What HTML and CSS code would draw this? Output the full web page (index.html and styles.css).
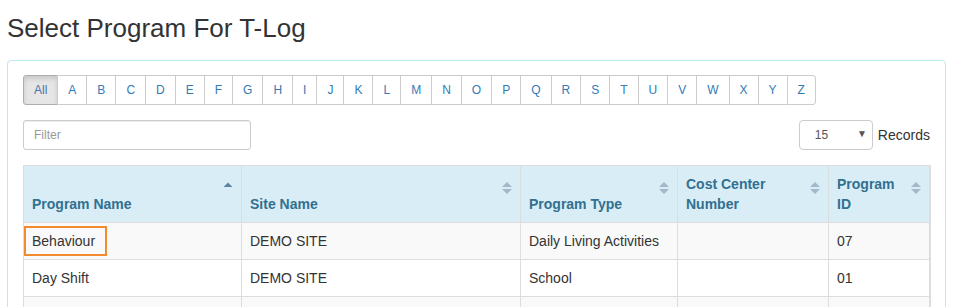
FILE: index.html
```html
<!DOCTYPE html>
<html lang="en">
<head>
  <meta charset="UTF-8">
  <meta name="viewport" content="width=device-width, initial-scale=1.0">
  <title>Select Program For T-Log</title>
  <link rel="stylesheet" href="styles.css">
</head>
<body>
  <div class="page">
    <h1 class="page-title">Select Program For T-Log</h1>

    <div class="panel">
      <!-- Letter filter -->
      <div class="letters">
        <button class="letter active">All</button>
        <button class="letter">A</button>
        <button class="letter">B</button>
        <button class="letter">C</button>
        <button class="letter">D</button>
        <button class="letter">E</button>
        <button class="letter">F</button>
        <button class="letter">G</button>
        <button class="letter">H</button>
        <button class="letter">I</button>
        <button class="letter">J</button>
        <button class="letter">K</button>
        <button class="letter">L</button>
        <button class="letter">M</button>
        <button class="letter">N</button>
        <button class="letter">O</button>
        <button class="letter">P</button>
        <button class="letter">Q</button>
        <button class="letter">R</button>
        <button class="letter">S</button>
        <button class="letter">T</button>
        <button class="letter">U</button>
        <button class="letter">V</button>
        <button class="letter">W</button>
        <button class="letter">X</button>
        <button class="letter">Y</button>
        <button class="letter">Z</button>
      </div>

      <div class="toolbar">
        <input class="filter" type="text" placeholder="Filter">
        <div class="records">
          <span class="select-wrap">
            <select class="page-size">
              <option>15</option>
              <option>30</option>
              <option>50</option>
            </select>
            <span class="caret">&#9660;</span>
          </span>
          <span>Records</span>
        </div>
      </div>

      <table class="programs">
        <colgroup>
          <col class="c1"><col class="c2"><col class="c3"><col class="c4"><col class="c5">
        </colgroup>
        <thead>
          <tr>
            <th>Program Name
              <svg class="sort" width="10" height="12" viewBox="0 0 10 12"><path class="asc" d="M0.5 5 L5 0.5 L9.5 5 Z"/></svg>
            </th>
            <th>Site Name
              <svg class="sort" width="10" height="12" viewBox="0 0 10 12"><path d="M0 5 L5 0 L10 5 Z M0 7 L10 7 L5 12 Z"/></svg>
            </th>
            <th>Program Type
              <svg class="sort" width="10" height="12" viewBox="0 0 10 12"><path d="M0 5 L5 0 L10 5 Z M0 7 L10 7 L5 12 Z"/></svg>
            </th>
            <th>Cost Center<br>Number
              <svg class="sort" width="10" height="12" viewBox="0 0 10 12"><path d="M0 5 L5 0 L10 5 Z M0 7 L10 7 L5 12 Z"/></svg>
            </th>
            <th>Program<br>ID
              <svg class="sort" width="10" height="12" viewBox="0 0 10 12"><path d="M0 5 L5 0 L10 5 Z M0 7 L10 7 L5 12 Z"/></svg>
            </th>
          </tr>
        </thead>
        <tbody>
          <tr>
            <td><span class="picked">Behaviour</span></td>
            <td>DEMO SITE</td>
            <td>Daily Living Activities</td>
            <td></td>
            <td>07</td>
          </tr>
          <tr>
            <td>Day Shift</td>
            <td>DEMO SITE</td>
            <td>School</td>
            <td></td>
            <td>01</td>
          </tr>
          <tr>
            <td>&nbsp;</td>
            <td></td>
            <td></td>
            <td></td>
            <td></td>
          </tr>
        </tbody>
      </table>
    </div>
  </div>
</body>
</html>
```

FILE: styles.css
```css
html, body {
  margin: 0;
  background-color: #ffffff;
  font-family: "Liberation Sans", Arial, sans-serif;
  font-size: 14px;
  color: #333333;
}
.page {
  padding: 0 7px;
}
.page-title {
  margin: 14px 0 18px;
  font-size: 26px;
  font-weight: normal;
  line-height: 28px;
  color: #333333;
}
.panel {
  border: 1px solid #bce8f1;
  border-radius: 4px;
  padding: 14px 15px 0;
  height: 300px;
}
.letters {
  display: flex;
}
.letter {
  margin: 0 0 0 -1px;
  padding: 5px 10px;
  font-family: inherit;
  font-size: 12px;
  line-height: 18px;
  color: #337ab7;
  background-color: #ffffff;
  border: 1px solid #cccccc;
  border-radius: 0;
  cursor: pointer;
}
.letter:first-child {
  margin-left: 0;
  border-radius: 3px 0 0 3px;
}
.letter:last-child {
  border-radius: 0 3px 3px 0;
}
.letter.active {
  background-color: #e6e6e6;
  border-color: #adadad;
  color: #4d73a8;
  box-shadow: inset 0 3px 5px rgba(0, 0, 0, 0.125);
}
.toolbar {
  display: flex;
  justify-content: space-between;
  align-items: center;
  margin-top: 15px;
}
.filter {
  box-sizing: border-box;
  width: 228px;
  height: 30px;
  padding: 5px 10px;
  font-family: inherit;
  font-size: 12px;
  color: #555555;
  border: 1px solid #cccccc;
  border-radius: 3px;
  box-shadow: inset 0 1px 1px rgba(0, 0, 0, 0.075);
}
.filter::placeholder {
  color: #999999;
}
.records {
  display: flex;
  align-items: center;
  gap: 5px;
}
.select-wrap {
  position: relative;
  display: inline-block;
}
.page-size {
  box-sizing: border-box;
  width: 74px;
  height: 30px;
  padding: 0 0 0 15px;
  font-family: inherit;
  font-size: 12px;
  color: #555555;
  background-color: #ffffff;
  border: 1px solid #cccccc;
  border-radius: 4px;
  -webkit-appearance: none;
  appearance: none;
  display: block;
}
.caret {
  position: absolute;
  right: 6px;
  top: 8px;
  font-size: 10px;
  color: #555555;
  pointer-events: none;
}
.programs {
  width: 906px;
  margin-top: 15px;
  border-collapse: collapse;
  table-layout: fixed;
}
.c1 { width: 218px; }
.c2 { width: 279px; }
.c3 { width: 157px; }
.c4 { width: 151px; }
.c5 { width: 101px; }
.programs th,
.programs td {
  padding: 8px 8px;
  line-height: 20px;
  text-align: left;
  border: 1px solid #dddddd;
}
.programs th:last-child,
.programs td:last-child {
  border-right: 2px solid #dddddd;
}
.programs th {
  position: relative;
  vertical-align: bottom;
  padding-right: 24px;
  background-color: #d9edf7;
  color: #31708f;
  font-weight: bold;
}
.sort {
  position: absolute;
  top: 16px;
  right: 8px;
  fill: #a3b9c8;
}
.sort .asc {
  fill: #5a86a6;
}
.programs tbody tr:nth-child(odd) td {
  background-color: #f9f9f9;
}
.programs tbody tr:nth-child(even) td {
  background-color: #ffffff;
}
.picked {
  margin-left: -8px;
  padding: 5px 10px 5px 6px;
  border: 2px solid #f28a2e;
}
```
